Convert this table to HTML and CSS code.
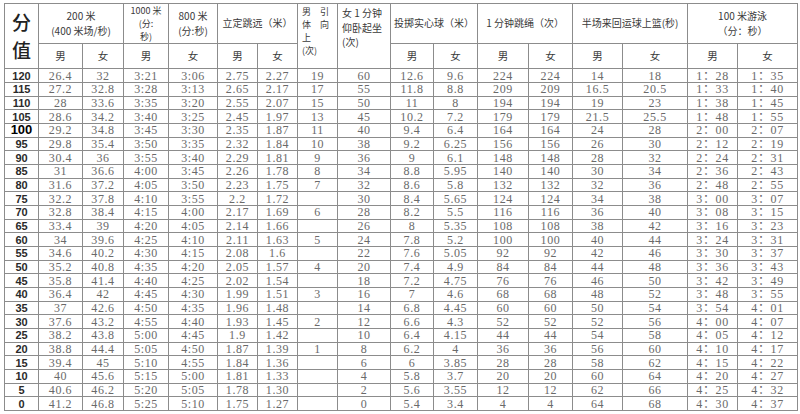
FILE: index.html
```html
<!DOCTYPE html>
<html lang="zh">
<head>
<meta charset="utf-8">
<title>评分标准</title>
<link rel="stylesheet" href="styles.css">
</head>
<body>
<table class="score">
<colgroup>
<col class="c34"><col class="c44"><col class="c41"><col class="c45"><col class="c49"><col class="c40"><col class="c40"><col class="c40"><col class="c53"><col class="c43"><col class="c44"><col class="c51"><col class="c44"><col class="c50"><col class="c65"><col class="c50"><col class="c60">
</colgroup>
<thead>
<tr class="h1">
<th rowspan="2" class="fz">分<br>值</th>
<th colspan="2">200 米<br>(400 米场/秒)</th>
<th class="tight">1000 米<br>(分:<br>秒)</th>
<th>800 米<br>(分:秒)</th>
<th colspan="2">立定跳远（米）</th>
<th rowspan="2" class="top tight">男&emsp;引<br>体&emsp;向<br>上<br>(次)</th>
<th rowspan="2" class="top">女 1 分钟<br>仰卧起坐<br>(次)</th>
<th colspan="2">投掷实心球（米）</th>
<th colspan="2">1 分钟跳绳（次）</th>
<th colspan="2">半场来回运球上篮(秒)</th>
<th colspan="2">100 米游泳<br>（分：秒）</th>
</tr>
<tr class="h2">
<th>男</th><th>女</th><th>男</th><th>女</th><th>男</th><th>女</th><th>男</th><th>女</th><th>男</th><th>女</th><th>男</th><th>女</th><th>男</th><th>女</th>
</tr>
</thead>
<tbody>
<tr><th>120</th><td>26.4</td><td>32</td><td>3:21</td><td>3:06</td><td>2.75</td><td>2.27</td><td>19</td><td>60</td><td>12.6</td><td>9.6</td><td>224</td><td>224</td><td>14</td><td>18</td><td>1：28</td><td>1：35</td></tr>
<tr><th>115</th><td>27.2</td><td>32.8</td><td>3:28</td><td>3:13</td><td>2.65</td><td>2.17</td><td>17</td><td>55</td><td>11.8</td><td>8.8</td><td>209</td><td>209</td><td>16.5</td><td>20.5</td><td>1：33</td><td>1：40</td></tr>
<tr><th>110</th><td>28</td><td>33.6</td><td>3:35</td><td>3:20</td><td>2.55</td><td>2.07</td><td>15</td><td>50</td><td>11</td><td>8</td><td>194</td><td>194</td><td>19</td><td>23</td><td>1：38</td><td>1：45</td></tr>
<tr><th>105</th><td>28.6</td><td>34.2</td><td>3:40</td><td>3:25</td><td>2.45</td><td>1.97</td><td>13</td><td>45</td><td>10.2</td><td>7.2</td><td>179</td><td>179</td><td>21.5</td><td>25.5</td><td>1：48</td><td>1：55</td></tr>
<tr><th class="big">100</th><td>29.2</td><td>34.8</td><td>3:45</td><td>3:30</td><td>2.35</td><td>1.87</td><td>11</td><td>40</td><td>9.4</td><td>6.4</td><td>164</td><td>164</td><td>24</td><td>28</td><td>2：00</td><td>2：07</td></tr>
<tr><th>95</th><td>29.8</td><td>35.4</td><td>3:50</td><td>3:35</td><td>2.32</td><td>1.84</td><td>10</td><td>38</td><td>9.2</td><td>6.25</td><td>156</td><td>156</td><td>26</td><td>30</td><td>2：12</td><td>2：19</td></tr>
<tr><th>90</th><td>30.4</td><td>36</td><td>3:55</td><td>3:40</td><td>2.29</td><td>1.81</td><td>9</td><td>36</td><td>9</td><td>6.1</td><td>148</td><td>148</td><td>28</td><td>32</td><td>2：24</td><td>2：31</td></tr>
<tr><th>85</th><td>31</td><td>36.6</td><td>4:00</td><td>3:45</td><td>2.26</td><td>1.78</td><td>8</td><td>34</td><td>8.8</td><td>5.95</td><td>140</td><td>140</td><td>30</td><td>34</td><td>2：36</td><td>2：43</td></tr>
<tr><th>80</th><td>31.6</td><td>37.2</td><td>4:05</td><td>3:50</td><td>2.23</td><td>1.75</td><td>7</td><td>32</td><td>8.6</td><td>5.8</td><td>132</td><td>132</td><td>32</td><td>36</td><td>2：48</td><td>2：55</td></tr>
<tr><th>75</th><td>32.2</td><td>37.8</td><td>4:10</td><td>3:55</td><td>2.2</td><td>1.72</td><td></td><td>30</td><td>8.4</td><td>5.65</td><td>124</td><td>124</td><td>34</td><td>38</td><td>3：00</td><td>3：07</td></tr>
<tr><th>70</th><td>32.8</td><td>38.4</td><td>4:15</td><td>4:00</td><td>2.17</td><td>1.69</td><td>6</td><td>28</td><td>8.2</td><td>5.5</td><td>116</td><td>116</td><td>36</td><td>40</td><td>3：08</td><td>3：15</td></tr>
<tr><th>65</th><td>33.4</td><td>39</td><td>4:20</td><td>4:05</td><td>2.14</td><td>1.66</td><td></td><td>26</td><td>8</td><td>5.35</td><td>108</td><td>108</td><td>38</td><td>42</td><td>3：16</td><td>3：23</td></tr>
<tr><th>60</th><td>34</td><td>39.6</td><td>4:25</td><td>4:10</td><td>2.11</td><td>1.63</td><td>5</td><td>24</td><td>7.8</td><td>5.2</td><td>100</td><td>100</td><td>40</td><td>44</td><td>3：24</td><td>3：31</td></tr>
<tr><th>55</th><td>34.6</td><td>40.2</td><td>4:30</td><td>4:15</td><td>2.08</td><td>1.6</td><td></td><td>22</td><td>7.6</td><td>5.05</td><td>92</td><td>92</td><td>42</td><td>46</td><td>3：30</td><td>3：37</td></tr>
<tr><th>50</th><td>35.2</td><td>40.8</td><td>4:35</td><td>4:20</td><td>2.05</td><td>1.57</td><td>4</td><td>20</td><td>7.4</td><td>4.9</td><td>84</td><td>84</td><td>44</td><td>48</td><td>3：36</td><td>3：43</td></tr>
<tr><th>45</th><td>35.8</td><td>41.4</td><td>4:40</td><td>4:25</td><td>2.02</td><td>1.54</td><td></td><td>18</td><td>7.2</td><td>4.75</td><td>76</td><td>76</td><td>46</td><td>50</td><td>3：42</td><td>3：49</td></tr>
<tr><th>40</th><td>36.4</td><td>42</td><td>4:45</td><td>4:30</td><td>1.99</td><td>1.51</td><td>3</td><td>16</td><td>7</td><td>4.6</td><td>68</td><td>68</td><td>48</td><td>52</td><td>3：48</td><td>3：55</td></tr>
<tr><th>35</th><td>37</td><td>42.6</td><td>4:50</td><td>4:35</td><td>1.96</td><td>1.48</td><td></td><td>14</td><td>6.8</td><td>4.45</td><td>60</td><td>60</td><td>50</td><td>54</td><td>3：54</td><td>4：01</td></tr>
<tr><th>30</th><td>37.6</td><td>43.2</td><td>4:55</td><td>4:40</td><td>1.93</td><td>1.45</td><td>2</td><td>12</td><td>6.6</td><td>4.3</td><td>52</td><td>52</td><td>52</td><td>56</td><td>4：00</td><td>4：07</td></tr>
<tr><th>25</th><td>38.2</td><td>43.8</td><td>5:00</td><td>4:45</td><td>1.9</td><td>1.42</td><td></td><td>10</td><td>6.4</td><td>4.15</td><td>44</td><td>44</td><td>54</td><td>58</td><td>4：05</td><td>4：12</td></tr>
<tr><th>20</th><td>38.8</td><td>44.4</td><td>5:05</td><td>4:50</td><td>1.87</td><td>1.39</td><td>1</td><td>8</td><td>6.2</td><td>4</td><td>36</td><td>36</td><td>56</td><td>60</td><td>4：10</td><td>4：17</td></tr>
<tr><th>15</th><td>39.4</td><td>45</td><td>5:10</td><td>4:55</td><td>1.84</td><td>1.36</td><td></td><td>6</td><td>6</td><td>3.85</td><td>28</td><td>28</td><td>58</td><td>62</td><td>4：15</td><td>4：22</td></tr>
<tr><th>10</th><td>40</td><td>45.6</td><td>5:15</td><td>5:00</td><td>1.81</td><td>1.33</td><td></td><td>4</td><td>5.8</td><td>3.7</td><td>20</td><td>20</td><td>60</td><td>64</td><td>4：20</td><td>4：27</td></tr>
<tr><th>5</th><td>40.6</td><td>46.2</td><td>5:20</td><td>5:05</td><td>1.78</td><td>1.30</td><td></td><td>2</td><td>5.6</td><td>3.55</td><td>12</td><td>12</td><td>62</td><td>66</td><td>4：25</td><td>4：32</td></tr>
<tr><th>0</th><td>41.2</td><td>46.8</td><td>5:25</td><td>5:10</td><td>1.75</td><td>1.27</td><td></td><td>0</td><td>5.4</td><td>3.4</td><td>4</td><td>4</td><td>64</td><td>68</td><td>4：30</td><td>4：37</td></tr>
</tbody>
</table>
</body>
</html>
```
FILE: styles.css
```css
html, body {
  margin: 0;
  background: #ffffff;
}
body {
  padding: 3px 3px 0 4px;
}
.score {
  border-collapse: collapse;
  table-layout: fixed;
  width: 793px;
  border: 1px solid #7a7a7a;
}
.c34 { width: 34px; }
.c40 { width: 40px; }
.c41 { width: 41px; }
.c43 { width: 43px; }
.c44 { width: 44px; }
.c45 { width: 45px; }
.c49 { width: 49px; }
.c50 { width: 50px; }
.c51 { width: 51px; }
.c53 { width: 53px; }
.c60 { width: 60px; }
.c65 { width: 65px; }

.score th, .score td {
  border: 1px solid #8c8c8c;
  padding: 0;
  text-align: center;
  vertical-align: middle;
  overflow: hidden;
  white-space: nowrap;
}
.score thead th {
  font-family: "Noto Sans CJK SC", "Noto Sans", sans-serif;
  font-weight: normal;
  font-size: 10px;
  line-height: 14.5px;
  color: #3a3a3a;
}
.h1 { height: 40px; }
.h2 { height: 25px; }
.score thead .h2 th { font-size: 10.5px; }
.score thead th.fz {
  font-size: 19px;
  line-height: 28px;
  font-weight: 500;
  color: #222;
}
.score thead th.tight {
  font-size: 9px;
  line-height: 13.1px;
}
.score thead th.top {
  vertical-align: top;
  text-align: left;
  padding: 2px 0 0 4px;
}
.score thead th.top.tight {
  padding-top: 1px;
}
tbody tr { height: 13.68px; }
tbody td {
  font-family: "Liberation Serif", "Noto Sans CJK SC", serif;
  font-size: 12px;
  line-height: 12px;
  letter-spacing: 0.6px;
  color: #6a6a6a;
}
tbody th {
  font-family: "Liberation Sans", Arial, sans-serif;
  font-weight: bold;
  font-size: 11px;
  line-height: 12px;
  color: #2a2a2a;
}
tbody th.big {
  font-size: 13px;
  color: #000;
}
```
